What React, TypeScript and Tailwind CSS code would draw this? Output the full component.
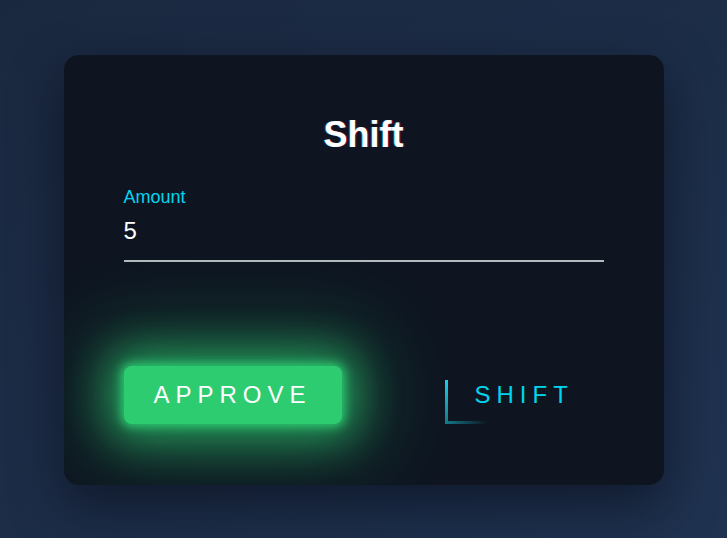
import { useState } from "react";

export default function App() {
  const [amount, setAmount] = useState("5");

  return (
    <div
      className="flex h-[538px] w-full items-start justify-center bg-gradient-to-br from-[#1a283f] to-[#1f3250] pt-[55px]"
      style={{ fontFamily: '"Liberation Sans", Arial, sans-serif' }}
    >
      <div className="flex h-[430px] w-[600px] flex-col overflow-hidden rounded-[15px] bg-[#0e1521] px-[60px] pt-[60px] shadow-[0_20px_50px_rgba(5,10,20,0.55)]">
        <h1 className="text-center text-[36px] font-bold leading-[40px] text-white [text-shadow:-1px_0_rgba(0,200,255,0.45),1px_0_rgba(255,0,60,0.45)]">
          Shift
        </h1>

        <label className="mt-[31px] block text-[18px] leading-[22px] text-[#00d5f0]">Amount</label>
        <input
          value={amount}
          onChange={(e) => setAmount(e.target.value)}
          className="mt-[9px] w-full border-b-2 border-[#b4babf] bg-transparent pb-[15px] text-[24px] leading-[28px] text-white outline-none"
        />

        <div className="mt-[104px] flex items-center justify-between">
          <button
            type="button"
            className="h-[58px] w-[218px] rounded-[8px] bg-[#2ecc71] text-[24px] tracking-[6px] text-white shadow-[0_0_10px_3px_rgba(46,204,113,0.9),0_0_40px_15px_rgba(46,204,113,0.6),0_0_80px_30px_rgba(46,204,113,0.32)]"
          >
            APPROVE
          </button>

          <button
            type="button"
            className="relative h-[58px] w-[159px] pl-[30px] text-left text-[24px] tracking-[6px] text-[#00d5f0]"
          >
            SHIFT
            <span className="absolute bottom-0 left-0 h-[44px] w-[3px] bg-gradient-to-b from-[#1ad0e8] to-[#137a8a]" />
            <span className="absolute bottom-0 left-0 h-[3px] w-[42px] bg-gradient-to-r from-[#137a8a] to-transparent" />
          </button>
        </div>
      </div>
    </div>
  );
}
